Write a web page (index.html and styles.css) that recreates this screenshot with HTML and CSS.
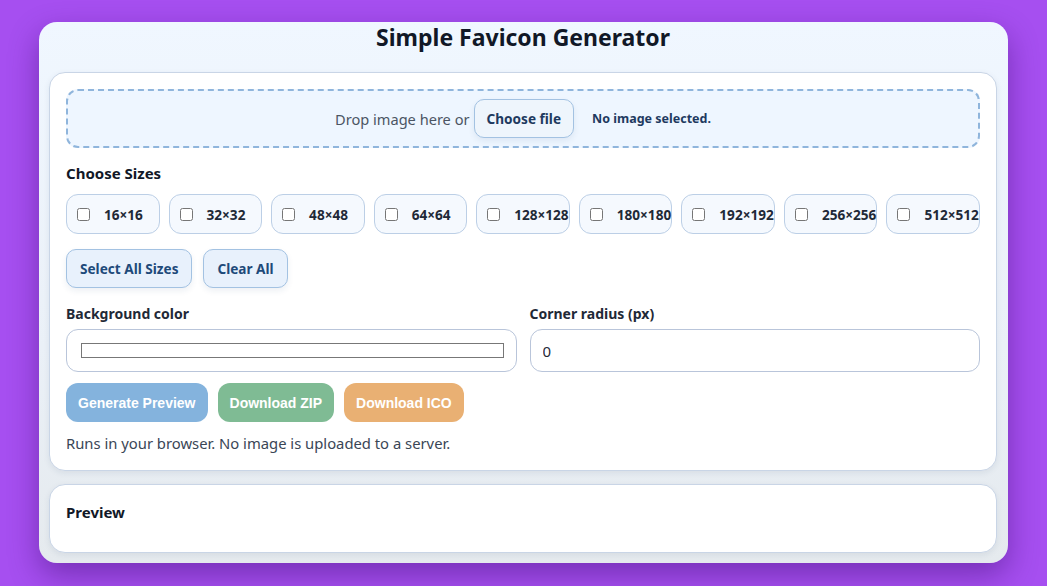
FILE: index.html
```html
<!DOCTYPE html>
<html lang="en">

<head>
    <meta charset="UTF-8">
    <meta name="viewport" content="width=device-width, initial-scale=1.0">
    <title>Simple Favicon Generator</title>
    <link rel="stylesheet" href="styles.css">
</head>

<body>
    <main class="app">
        <h1 class="title">Simple Favicon Generator</h1>

        <section class="card">
            <div class="drop-zone">
                <span class="drop-text">Drop image here or</span>
                <button class="soft-btn file-btn" type="button">Choose file</button>
                <span class="file-name">No image selected.</span>
            </div>

            <h2 class="section-title">Choose Sizes</h2>
            <div class="sizes">
                <label class="chip"><input type="checkbox"><span>16×16</span></label>
                <label class="chip"><input type="checkbox"><span>32×32</span></label>
                <label class="chip"><input type="checkbox"><span>48×48</span></label>
                <label class="chip"><input type="checkbox"><span>64×64</span></label>
                <label class="chip"><input type="checkbox"><span>128×128</span></label>
                <label class="chip"><input type="checkbox"><span>180×180</span></label>
                <label class="chip"><input type="checkbox"><span>192×192</span></label>
                <label class="chip"><input type="checkbox"><span>256×256</span></label>
                <label class="chip"><input type="checkbox"><span>512×512</span></label>
            </div>

            <div class="row">
                <button class="soft-btn" type="button">Select All Sizes</button>
                <button class="soft-btn" type="button">Clear All</button>
            </div>

            <div class="fields">
                <div class="field">
                    <label class="field-label" for="bg">Background color</label>
                    <div class="input-box">
                        <span class="swatch"></span>
                    </div>
                </div>
                <div class="field">
                    <label class="field-label" for="radius">Corner radius (px)</label>
                    <input class="input-box" id="radius" type="text" value="0">
                </div>
            </div>

            <div class="row actions">
                <button class="action blue" type="button">Generate Preview</button>
                <button class="action green" type="button">Download ZIP</button>
                <button class="action orange" type="button">Download ICO</button>
            </div>

            <p class="note">Runs in your browser. No image is uploaded to a server.</p>
        </section>

        <section class="card preview">
            <h2 class="section-title">Preview</h2>
            <div class="preview-grid"></div>
        </section>
    </main>
</body>

</html>
```

FILE: styles.css
```css
body {
    margin: 0;
    padding: 22px 39px 0;
    background-color: #a64ff0;
    font-family: "Noto Sans", "Open Sans", sans-serif;
    color: #1f2937;
    height: 586px;
    box-sizing: border-box;
    overflow: hidden;
}

.app {
    background: linear-gradient(180deg, #f0f7ff 0%, #eaf0f7 60%, #e5eaee 100%);
    border-radius: 18px;
    padding: 1px 11px 10px 10px;
    box-shadow: 0 12px 30px rgba(60, 10, 110, 0.45);
}

.title {
    margin: 0 0 21px;
    text-align: center;
    font-size: 23px;
    line-height: 28px;
    font-weight: 700;
    color: #111827;
}

.card {
    background-color: #fff;
    border: 1px solid #c9d5e6;
    border-radius: 16px;
    padding: 16px;
    box-shadow: 0 2px 6px rgba(30, 50, 90, 0.08);
}

.preview {
    margin-top: 13px;
}

.preview-grid {
    height: 13px;
}

.drop-zone {
    display: flex;
    align-items: center;
    justify-content: center;
    padding: 8px;
    border: 2px dashed #8fb5dc;
    border-radius: 12px;
    background-color: #eef6ff;
}

.drop-text {
    font-size: 14.6px;
    color: #4b5563;
    margin-right: 4px;
}

.soft-btn {
    height: 39px;
    padding: 0 13px;
    border: 1px solid #a3c2e2;
    border-radius: 10px;
    background-color: #e8f1fc;
    color: #1e4a7a;
    font-family: "Noto Sans", sans-serif;
    font-size: 13.6px;
    font-weight: 700;
    box-shadow: 0 3px 6px rgba(30, 60, 110, 0.08);
}

.file-btn {
    padding: 0 12px;
    background-color: #eef5fc;
    color: #1e3a5f;
}

.file-name {
    margin-left: 18px;
    font-size: 12.5px;
    font-weight: 700;
    color: #1e3a5f;
}

.section-title {
    margin: 14px 0 10px;
    font-size: 15px;
    line-height: 22px;
    font-weight: 700;
    color: #111827;
}

.preview .section-title {
    margin: 0;
}

.sizes {
    display: grid;
    grid-template-columns: repeat(9, 1fr);
    gap: 9px;
}

.chip {
    display: flex;
    align-items: center;
    gap: 14px;
    height: 40px;
    box-sizing: border-box;
    padding-left: 10px;
    border: 1px solid #bccfe6;
    border-radius: 12px;
    background-color: #f5f9fe;
    font-size: 13.6px;
    font-weight: 700;
    color: #1f2937;
    white-space: nowrap;
    min-width: 0;
}

.chip input {
    margin: 0;
    width: 13px;
    height: 13px;
    flex-shrink: 0;
}

.row {
    display: flex;
    gap: 11px;
    margin-top: 15px;
}

.fields {
    display: grid;
    grid-template-columns: 1fr 1fr;
    gap: 13px;
    margin-top: 16px;
}

.field-label {
    display: block;
    font-size: 14px;
    line-height: 20px;
    font-weight: 700;
    color: #1f2937;
    margin-bottom: 5px;
}

.input-box {
    display: flex;
    align-items: center;
    width: 100%;
    height: 43px;
    box-sizing: border-box;
    padding: 0 12px 0 14px;
    border: 1px solid #b9c5da;
    border-radius: 12px;
    background-color: #fff;
    font-family: "Noto Sans", sans-serif;
    font-size: 15px;
    color: #1f2937;
}

input.input-box {
    padding-left: 12px;
}

.swatch {
    flex: 1;
    height: 13px;
    border: 1px solid #777;
    background-color: #fff;
}

.actions {
    margin-top: 11px;
    gap: 10px;
}

.action {
    height: 39px;
    padding: 0 12px;
    border: none;
    border-radius: 12px;
    color: #fff;
    font-family: "Liberation Sans", Arial, sans-serif;
    font-size: 14px;
    font-weight: 700;
}

.blue {
    background-color: #84b3dd;
}

.green {
    background-color: #7fbb94;
}

.orange {
    background-color: #e9b073;
}

.note {
    margin: 10px 0 0;
    font-size: 14.8px;
    line-height: 22px;
    color: #3a4656;
}
```
